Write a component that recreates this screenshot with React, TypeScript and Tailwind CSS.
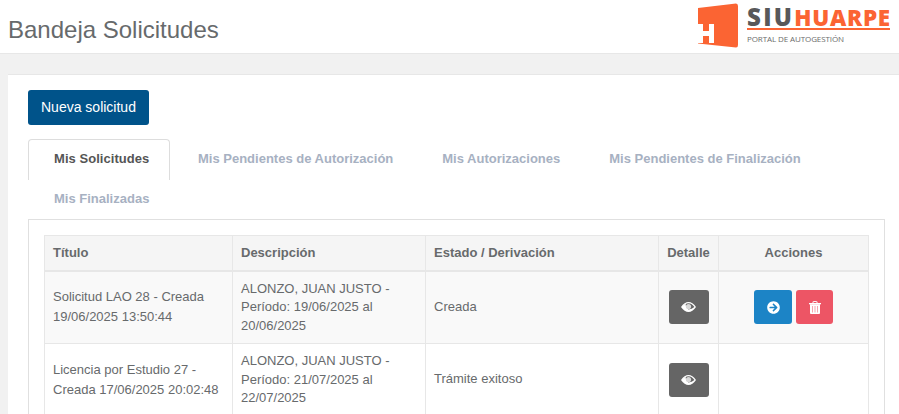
import React from 'react';
import { FaArrowCircleRight } from 'react-icons/fa';

const rows = [
  {
    titulo: 'Solicitud LAO 28 - Creada 19/06/2025 13:50:44',
    descripcion: 'ALONZO, JUAN JUSTO - Período: 19/06/2025 al 20/06/2025',
    estado: 'Creada',
    acciones: true,
  },
  {
    titulo: 'Licencia por Estudio 27 - Creada 17/06/2025 20:02:48',
    descripcion: 'ALONZO, JUAN JUSTO - Período: 21/07/2025 al 22/07/2025',
    estado: 'Trámite exitoso',
    acciones: false,
  },
];

const EyeIcon = () => (
  <svg width="15" height="10" viewBox="0 0 15 10">
    <path d="M0 5 Q3.5 0 7.5 0 Q11.5 0 15 5 Q11.5 10 7.5 10 Q3.5 10 0 5 Z" fill="#ffffff" />
    <path d="M1.6 5 Q3 3 5 2 Q4 5 7.5 7.5 Q11 7 13.4 5 Q11 1.3 7.5 1.2 Q4 1.3 1.6 5 Z" fill="#656565" />
    <circle cx="7.5" cy="4.5" r="2.6" fill="#d9d9d9" />
  </svg>
);

const TrashIcon = () => (
  <svg width="12" height="13" viewBox="0 0 12 13">
    <path d="M4 2 V1 Q4 0.4 4.6 0.4 H7.4 Q8 0.4 8 1 V2" stroke="#ffffff" strokeWidth="1" fill="none" />
    <rect x="0" y="2" width="12" height="1.3" fill="#ffffff" />
    <path d="M1 3.3 H11 V12 Q11 13 10 13 H2 Q1 13 1 12 Z" fill="#ffffff" />
    <path d="M3.5 5 V11.5 M6 5 V11.5 M8.5 5 V11.5" stroke="#f6a5ad" strokeWidth="1" />
  </svg>
);

const Logo = () => (
  <div className="flex items-start">
    <svg width="42" height="45" viewBox="0 0 42 45" className="mt-[3px]">
      <path d="M1 5 L39 0.5 Q41 0.5 41 3 L41 42 Q41 44.5 39 44.5 L1 40.5 Z" fill="#fb6433" />
      <path d="M1 21 H6 V28 H12 V21 H17 V40 H12 V33 H6 V40 H1 Z" fill="#ffffff" />
    </svg>
    <div className="ml-[8px] w-[143px]">
      <div className="h-[28px] mt-[2px] pt-[2px] text-[22.5px] leading-[26px] font-black font-['Open_Sans',sans-serif] whitespace-nowrap border-b-2 border-[#fb6433]">
        <span className="text-[#58585a] text-[24px] tracking-[2.3px]">SIU</span>
        <span className="text-[#fb6433] tracking-[0.7px]">HUARPE</span>
      </div>
      <div className="text-[8px] leading-[10px] mt-[4px] tracking-[-0.1px] text-[#6b6b6b] font-['Open_Sans',sans-serif] whitespace-nowrap">
        PORTAL DE AUTOGESTIÓN
      </div>
    </div>
  </div>
);

export default function App() {
  return (
    <div className="h-[414px] overflow-hidden bg-[#f1f1f1] font-['Liberation_Sans',sans-serif]">
      <header className="h-[54px] bg-white border-b border-[#e7e7e7] flex justify-between pl-[8px] pr-[9px]">
        <h1 className="text-[24px] leading-[60px] text-[#676a6c]">Bandeja Solicitudes</h1>
        <Logo />
      </header>

      <main className="mt-[20px] ml-[8px] bg-white border-t border-[#e7e7e7] pt-[15px] pl-[20px] pr-[14px]">
        <button className="h-[35px] px-[13px] bg-[#00538a] rounded-[3px] text-[14px] text-white">Nueva solicitud</button>

        <div className="mt-[14px] flex flex-wrap text-[13px] font-bold text-[#a7b1c2] leading-[18px]">
          <div className="w-[142px] h-[41px] pt-[10px] pl-[25px] bg-white border border-b-0 border-[#dddddd] rounded-t-[4px] text-[#555555] tracking-[0.05px]">
            Mis Solicitudes
          </div>
          <div className="h-[41px] pt-[11px] pl-[28px] pr-[23px]">Mis Pendientes de Autorización</div>
          <div className="h-[41px] pt-[11px] pl-[26px] pr-[23px]">Mis Autorizaciones</div>
          <div className="h-[41px] pt-[11px] pl-[26px] pr-[23px]">Mis Pendientes de Finalización</div>
          <div className="h-[39px] pt-[10px] px-[26px]">Mis Finalizadas</div>
        </div>

        <div className="border border-[#e0e0e0] pt-[15px] px-[15px]">
          <table className="w-[824px] table-fixed border-collapse text-[13px] text-[#676a6c]">
            <colgroup>
              <col className="w-[188px]" />
              <col className="w-[193px]" />
              <col className="w-[233px]" />
              <col className="w-[60px]" />
              <col className="w-[150px]" />
            </colgroup>
            <thead>
              <tr className="h-[35px] bg-[#f5f5f5] text-[#676a6c]">
                <th className="border-2 border-[#e7e7e7] border-t-1 border-x-1 px-[8px] text-left">Título</th>
                <th className="border-2 border-[#e7e7e7] border-t-1 border-x-1 px-[8px] text-left">Descripción</th>
                <th className="border-2 border-[#e7e7e7] border-t-1 border-x-1 px-[8px] text-left">Estado / Derivación</th>
                <th className="border-2 border-[#e7e7e7] border-t-1 border-x-1 text-center">Detalle</th>
                <th className="border-2 border-[#e7e7e7] border-t-1 border-x-1 text-center">Acciones</th>
              </tr>
            </thead>
            <tbody>
              {rows.map((row) => (
                <tr key={row.titulo} className={row.acciones ? 'h-[73px] bg-[#f9f9f9]' : 'h-[73px] bg-white'}>
                  <td className="border border-[#e7e7e7] px-[8px] leading-[20px]">{row.titulo}</td>
                  <td className="border border-[#e7e7e7] px-[8px] leading-[18.5px]">{row.descripcion}</td>
                  <td className="border border-[#e7e7e7] px-[8px] pb-[2px]">{row.estado}</td>
                  <td className="border border-[#e7e7e7] text-center">
                    <button className="w-[40px] h-[34px] inline-flex items-center justify-center align-middle rounded-[3px] bg-[#656565] text-white">
                      <EyeIcon />
                    </button>
                  </td>
                  <td className="border border-[#e7e7e7]">
                    {row.acciones && (
                      <div className="flex justify-center gap-[4px]">
                        <button className="w-[38px] h-[34px] flex items-center justify-center rounded-[3px] bg-[#1c84c6] text-white">
                          <FaArrowCircleRight size={13} />
                        </button>
                        <button className="w-[37px] h-[34px] flex items-center justify-center rounded-[3px] bg-[#ed5565] text-white">
                          <TrashIcon />
                        </button>
                      </div>
                    )}
                  </td>
                </tr>
              ))}
            </tbody>
          </table>
        </div>
      </main>
    </div>
  );
}
